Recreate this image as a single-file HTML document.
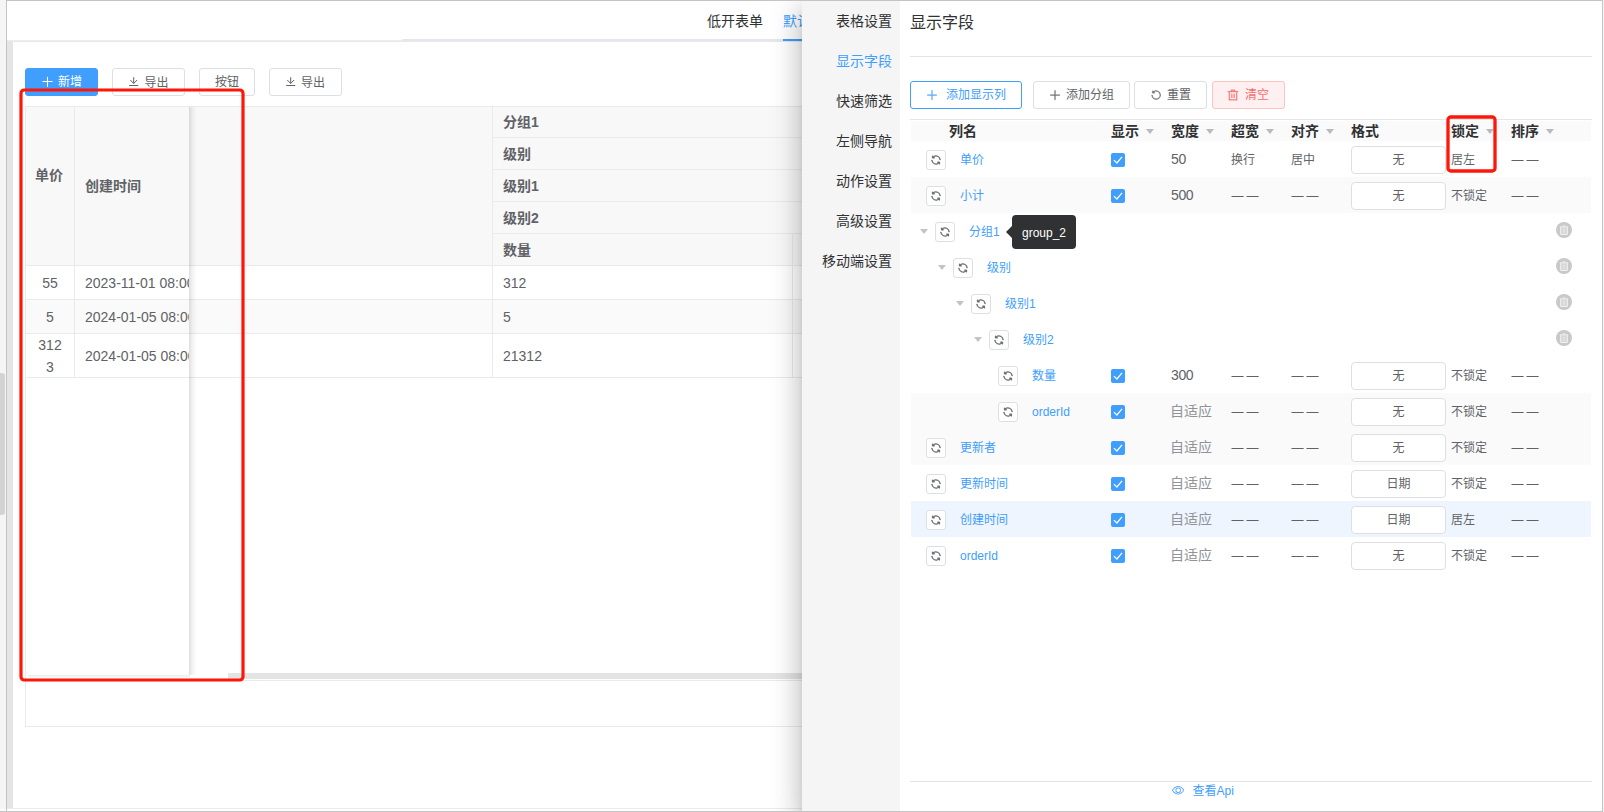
<!DOCTYPE html>
<html lang="zh-CN">
<head>
<meta charset="utf-8">
<title>显示字段</title>
<style>
*{box-sizing:border-box;margin:0;padding:0}
html,body{width:1604px;height:812px;overflow:hidden;background:#f5f5f5}
body{position:relative;font-family:"Liberation Sans","Noto Sans CJK SC",sans-serif;font-size:14px;color:#606266}
.abs{position:absolute}
#frame{position:absolute;left:6px;top:0;width:1597px;height:812px;background:#fff;border:1px solid #c4c4c4;overflow:hidden}
/* everything inside #page is positioned in page coordinates */
#page{position:absolute;left:-7px;top:-1px;width:1604px;height:812px}
.btn{position:absolute;height:28px;border:1px solid #dcdfe6;border-radius:3px;background:#fff;color:#606266;font-size:12px;line-height:26px;white-space:nowrap}
.btn svg{position:absolute}
.btn span{position:absolute;top:0}
</style>
</head>
<body>
<div class="abs" style="left:0;top:811px;width:7px;height:1px;background:#c4c4c4"></div>
<div class="abs" style="left:0;top:809px;width:6px;height:2px;background:#fcfcfc"></div>
<div class="abs" style="left:0;top:373px;width:5px;height:142px;background:#d3d3d3;border-radius:0 3px 3px 0"></div>
<div id="frame"><div id="page">

<!-- ===== left page (behind drawer) ===== -->
<div id="left">
<style>
#left .hl{position:absolute;height:1px;background:#e8eaec}
#left .vl{position:absolute;width:1px;background:#e8eaec}
#left .th{position:absolute;font-weight:bold;font-size:14px;color:#606266;line-height:20px;white-space:nowrap}
#left .td{position:absolute;font-size:14px;color:#606266;line-height:22px;white-space:nowrap}
</style>
<!-- outer scrollbar thumb on the far left -->
<!-- top tab bar -->
<div class="abs" style="left:7px;top:40px;width:395px;height:1px;background:#f3eaea"></div>
<div class="abs" style="left:402px;top:39px;width:400px;height:2px;background:#e4e7ed"></div>
<div class="abs" style="left:7px;top:41px;width:800px;height:1px;background:#e8e8e8"></div>
<div class="abs" style="left:783px;top:39px;width:56px;height:2px;background:#409eff"></div>
<div class="abs" style="left:707px;top:11px;font-size:14px;line-height:20px;color:#303133;white-space:nowrap">低开表单</div>
<div class="abs" style="left:783px;top:11px;font-size:14px;line-height:20px;color:#409eff;white-space:nowrap">默认视图</div>
<!-- grey gutter -->
<div class="abs" style="left:7px;top:42px;width:6px;height:766px;background:#e5e5e5"></div>
<div class="abs" style="left:7px;top:808px;width:1596px;height:1px;background:#ebebeb"></div>

<!-- toolbar buttons -->
<div class="btn" style="left:25px;top:68px;width:73px;background:#409eff;border-color:#409eff;color:#fff">
  <svg style="left:16px;top:7px" width="12" height="12" viewBox="0 0 12 12"><path d="M5.5 0.8v10M0.5 5.5h10" stroke="#fff" stroke-width="1" fill="none"/></svg>
  <span style="left:32px">新增</span>
</div>
<div class="btn" style="left:112px;top:68px;width:73px">
  <svg style="left:16px;top:7px" width="12" height="12" viewBox="0 0 12 12"><path d="M4.7 1.2v6.2M1.3 4l3.4 3.5 3.4-3.5M0.2 9.5h9.1" stroke="#606266" stroke-width="1" fill="none"/></svg>
  <span style="left:31.6px;top:0.5px">导出</span>
</div>
<div class="btn" style="left:199px;top:68px;width:56px"><span style="left:15px">按钮</span></div>
<div class="btn" style="left:269px;top:68px;width:73px">
  <svg style="left:15.6px;top:7px" width="12" height="12" viewBox="0 0 12 12"><path d="M4.7 1.2v6.2M1.3 4l3.4 3.5 3.4-3.5M0.2 9.5h9.1" stroke="#606266" stroke-width="1" fill="none"/></svg>
  <span style="left:31px;top:0.5px">导出</span>
</div>

<!-- vxe table -->
<div class="abs" style="left:25px;top:106px;width:900px;height:575px;border:1px solid #e8eaec;border-right:0;background:#fff"></div>
<div class="abs" style="left:26px;top:107px;width:900px;height:158px;background:#f8f8f9"></div>
<div class="abs" style="left:26px;top:300px;width:900px;height:33px;background:#fafafa"></div>
<!-- header group lines -->
<div class="hl" style="left:492px;top:137px;width:400px"></div>
<div class="hl" style="left:492px;top:169px;width:400px"></div>
<div class="hl" style="left:492px;top:201px;width:400px"></div>
<div class="hl" style="left:492px;top:233px;width:400px"></div>
<div class="hl" style="left:26px;top:265px;width:900px"></div>
<div class="hl" style="left:26px;top:299px;width:900px"></div>
<div class="hl" style="left:26px;top:333px;width:900px"></div>
<div class="hl" style="left:26px;top:377px;width:900px"></div>
<div class="vl" style="left:74px;top:107px;height:271px"></div>
<div class="vl" style="left:492px;top:107px;height:271px"></div>
<div class="vl" style="left:792px;top:234px;height:144px"></div>
<div class="th" style="left:35px;top:165px">单价</div>
<div class="th" style="left:85px;top:176px">创建时间</div>
<div class="th" style="left:503px;top:112px">分组1</div>
<div class="th" style="left:503px;top:144px">级别</div>
<div class="th" style="left:503px;top:176px">级别1</div>
<div class="th" style="left:503px;top:208px">级别2</div>
<div class="th" style="left:503px;top:240px">数量</div>
<div class="td" style="left:26px;width:48px;text-align:center;top:272px">55</div>
<div class="td" style="left:26px;width:48px;text-align:center;top:306px">5</div>
<div class="td" style="left:26px;width:48px;text-align:center;top:334px;white-space:normal">312<br>3</div>
<div class="td" style="left:85px;top:272px;width:104px;overflow:hidden">2023-11-01 08:00:00</div>
<div class="td" style="left:85px;top:306px;width:104px;overflow:hidden">2024-01-05 08:00:00</div>
<div class="td" style="left:85px;top:345px;width:104px;overflow:hidden">2024-01-05 08:00:00</div>
<div class="td" style="left:503px;top:272px">312</div>
<div class="td" style="left:503px;top:306px">5</div>
<div class="td" style="left:503px;top:345px">21312</div>
<!-- fixed-left shadow -->
<div class="abs" style="left:189px;top:107px;width:8px;height:568px;background:linear-gradient(90deg,rgba(0,0,0,.13),rgba(0,0,0,.05) 40%,rgba(0,0,0,0))"></div>
<div class="abs" style="left:28px;top:675px;width:162px;height:3px;background:linear-gradient(180deg,rgba(0,0,0,.08),rgba(0,0,0,0))"></div>
<!-- horizontal scrollbar -->
<div class="abs" style="left:228px;top:673px;width:700px;height:6px;background:#e4e4e4"></div>
<!-- pager box -->
<div class="abs" style="left:25px;top:680px;width:900px;height:47px;border:1px solid #e8eaec;border-right:0"></div>
<!-- red annotation box -->
<svg class="abs" style="left:14px;top:84px" width="240" height="604" viewBox="14 84 240 604"><rect x="21" y="90" width="222" height="590" rx="3.2" fill="none" stroke="#fe1609" stroke-width="3.2"/></svg>
</div>

<!-- ===== drawer ===== -->
<div id="drawer">
<style>
#drawer{position:absolute;left:802px;top:0;width:802px;height:812px;background:#fff;box-shadow:0 8px 10px -5px rgba(0,0,0,.2),0 16px 24px 2px rgba(0,0,0,.14),0 6px 30px 5px rgba(0,0,0,.12)}
#dpage{position:absolute;left:-802px;top:0;width:1604px;height:812px}
.mi{position:absolute;left:802px;width:90px;text-align:right;font-size:14px;line-height:20px;color:#303133;white-space:nowrap}
.mi.on{color:#409eff}
.hd{position:absolute;font-size:14px;font-weight:bold;color:#303133;line-height:20px;white-space:nowrap}
.car{position:absolute;width:0;height:0;border-left:4px solid transparent;border-right:4px solid transparent;border-top:5px solid #c0c4cc}
.car.hc{border-top-color:#b6b9bf}
.ib{position:absolute;width:20px;height:20px;border:1px solid #dcdfe6;border-radius:3px;background:#fff}
.nm{position:absolute;font-size:12px;line-height:18px;color:#409eff;white-space:nowrap}
.cb{position:absolute;width:14px;height:14px;border-radius:2px;background:#409eff}
.t14{position:absolute;font-size:14px;line-height:20px;color:#606266;white-space:nowrap}
.t14.g{color:#909399}
.t12{position:absolute;font-size:12px;line-height:18px;color:#606266;white-space:nowrap}
.ds{position:absolute;font-size:12px;line-height:18px;color:#606266;white-space:nowrap;letter-spacing:3px}
.inp{position:absolute;width:95px;height:28px;border:1px solid #dcdfe6;border-radius:4px;background:#fff;font-size:12px;line-height:26px;text-align:center;color:#606266}
</style>
<div id="dpage">
<div class="abs" style="left:802px;top:0;width:98px;height:812px;background:#f5f5f5"></div>
<div class="mi" style="top:11px">表格设置</div><div class="mi on" style="top:51px">显示字段</div><div class="mi" style="top:91px">快速筛选</div><div class="mi" style="top:131px">左侧导航</div><div class="mi" style="top:171px">动作设置</div><div class="mi" style="top:211px">高级设置</div><div class="mi" style="top:251px">移动端设置</div>
<div class="abs" style="left:910px;top:11px;font-size:16px;line-height:24px;color:#303133;white-space:nowrap">显示字段</div>
<div class="abs" style="left:910px;top:56px;width:682px;height:1px;background:#e0e3ea"></div>
<!-- buttons -->
<div class="btn" style="left:910px;top:81px;width:112px;border-color:#409eff;color:#409eff">
  <svg style="left:15.3px;top:6.6px" width="12" height="12" viewBox="0 0 1024 1024"><path stroke="#409eff" stroke-width="24" fill="#409eff" d="M480 480V128a32 32 0 0 1 64 0v352h352a32 32 0 1 1 0 64H544v352a32 32 0 1 1-64 0V544H128a32 32 0 0 1 0-64h352z"/></svg>
  <span style="left:35px">添加显示列</span>
</div>
<div class="btn" style="left:1033px;top:81px;width:97px">
  <svg style="left:15px;top:6.6px" width="12" height="12" viewBox="0 0 1024 1024"><path stroke="#606266" stroke-width="24" fill="#606266" d="M480 480V128a32 32 0 0 1 64 0v352h352a32 32 0 1 1 0 64H544v352a32 32 0 1 1-64 0V544H128a32 32 0 0 1 0-64h352z"/></svg>
  <span style="left:32px">添加分组</span>
</div>
<div class="btn" style="left:1134px;top:81px;width:73px">
  <svg style="left:15.4px;top:6.5px" width="12" height="12" viewBox="0 0 1024 1024"><path stroke="#606266" stroke-width="24" fill="#606266" d="M289.088 296.704h92.992a32 32 0 0 1 0 64H232.960a32 32 0 0 1-32-32V179.712a32 32 0 0 1 64 0v50.560a384 384 0 0 1 643.840 282.880 384 384 0 0 1-383.936 384 384 384 0 0 1-384-384h64a320 320 0 1 0 640 0 320 320 0 0 0-555.712-216.448z"/></svg>
  <span style="left:32px">重置</span>
</div>
<div class="btn" style="left:1212px;top:81px;width:73px;background:#fef0f0;border-color:#fbc4c4;color:#f56c6c">
  <svg style="left:14.3px;top:6.5px" width="12" height="12" viewBox="0 0 1024 1024"><path stroke="#f56c6c" stroke-width="24" fill="#f56c6c" d="M160 256H96a32 32 0 0 1 0-64h256V95.936a32 32 0 0 1 32-32h256a32 32 0 0 1 32 32V192h256a32 32 0 1 1 0 64h-64v672a32 32 0 0 1-32 32H192a32 32 0 0 1-32-32V256zm448-64v-64H416v64h192zM224 896h576V256H224v640zm192-128a32 32 0 0 1-32-32V416a32 32 0 0 1 64 0v320a32 32 0 0 1-32 32zm192 0a32 32 0 0 1-32-32V416a32 32 0 0 1 64 0v320a32 32 0 0 1-32 32z"/></svg>
  <span style="left:32px">清空</span>
</div>
<!-- table header -->
<div class="abs" style="left:910px;top:119px;width:682px;height:1px;background:#e6e6e6"></div>
<div class="abs" style="left:911px;top:121px;width:680px;height:20px;background:#fafafa"></div>
<div class="hd" style="left:949px;top:121px">列名</div><div class="hd" style="left:1111px;top:121px">显示</div><div class="car hc" style="left:1145.5px;top:129px"></div><div class="hd" style="left:1171px;top:121px">宽度</div><div class="car hc" style="left:1205.5px;top:129px"></div><div class="hd" style="left:1231px;top:121px">超宽</div><div class="car hc" style="left:1265.5px;top:129px"></div><div class="hd" style="left:1291px;top:121px">对齐</div><div class="car hc" style="left:1325.5px;top:129px"></div><div class="hd" style="left:1351px;top:121px">格式</div><div class="hd" style="left:1451px;top:121px">锁定</div><div class="car hc" style="left:1485.5px;top:129px"></div><div class="hd" style="left:1511px;top:121px">排序</div><div class="car hc" style="left:1545.5px;top:129px"></div>
<div class="ib" style="left:926px;top:150px"><svg width="12" height="12" viewBox="0 0 1024 1024" style="position:absolute;left:3.35px;top:2.5px"><path fill="#55585e" stroke="#55585e" stroke-width="30" d="M771.776 794.88A384 384 0 0 1 128 512h64a320 320 0 0 0 555.712 216.448H654.720a32 32 0 1 1 0-64h149.056a32 32 0 0 1 32 32v148.928a32 32 0 1 1-64 0v-50.560zM276.288 295.616h92.992a32 32 0 0 1 0 64H220.160a32 32 0 0 1-32-32V178.560a32 32 0 0 1 64 0v50.560A384 384 0 0 1 896.128 512h-64a320 320 0 0 0-555.776-216.384z"/></svg></div>
<div class="nm" style="left:960px;top:151px">单价</div>
<div class="cb" style="left:1111px;top:153px"><svg width="14" height="14" viewBox="0 0 14 14" style="position:absolute;left:0;top:0"><path d="M2.9 7.1L5.9 10 11 3.9" fill="none" stroke="#fff" stroke-width="1.2"/></svg></div>
<div class="t14" style="left:1171px;top:149px;letter-spacing:-0.4px">50</div>
<div class="t12" style="left:1231px;top:151px">换行</div>
<div class="t12" style="left:1291px;top:151px">居中</div>
<div class="inp" style="left:1351px;top:146px">无</div>
<div class="t12" style="left:1451px;top:151px">居左</div>
<div class="ds" style="left:1511.5px;top:151px">——</div>
<div class="abs" style="left:911px;top:177px;width:680px;height:36px;background:#fafafa"></div>
<div class="ib" style="left:926px;top:186px"><svg width="12" height="12" viewBox="0 0 1024 1024" style="position:absolute;left:3.35px;top:2.5px"><path fill="#55585e" stroke="#55585e" stroke-width="30" d="M771.776 794.88A384 384 0 0 1 128 512h64a320 320 0 0 0 555.712 216.448H654.720a32 32 0 1 1 0-64h149.056a32 32 0 0 1 32 32v148.928a32 32 0 1 1-64 0v-50.560zM276.288 295.616h92.992a32 32 0 0 1 0 64H220.160a32 32 0 0 1-32-32V178.560a32 32 0 0 1 64 0v50.560A384 384 0 0 1 896.128 512h-64a320 320 0 0 0-555.776-216.384z"/></svg></div>
<div class="nm" style="left:960px;top:187px">小计</div>
<div class="cb" style="left:1111px;top:189px"><svg width="14" height="14" viewBox="0 0 14 14" style="position:absolute;left:0;top:0"><path d="M2.9 7.1L5.9 10 11 3.9" fill="none" stroke="#fff" stroke-width="1.2"/></svg></div>
<div class="t14" style="left:1171px;top:185px;letter-spacing:-0.4px">500</div>
<div class="ds" style="left:1231.5px;top:187px">——</div>
<div class="ds" style="left:1291.5px;top:187px">——</div>
<div class="inp" style="left:1351px;top:182px">无</div>
<div class="t12" style="left:1451px;top:187px">不锁定</div>
<div class="ds" style="left:1511.5px;top:187px">——</div>
<div class="car" style="left:919.5px;top:229px"></div>
<div class="ib" style="left:935px;top:222px"><svg width="12" height="12" viewBox="0 0 1024 1024" style="position:absolute;left:3.35px;top:2.5px"><path fill="#55585e" stroke="#55585e" stroke-width="30" d="M771.776 794.88A384 384 0 0 1 128 512h64a320 320 0 0 0 555.712 216.448H654.720a32 32 0 1 1 0-64h149.056a32 32 0 0 1 32 32v148.928a32 32 0 1 1-64 0v-50.560zM276.288 295.616h92.992a32 32 0 0 1 0 64H220.160a32 32 0 0 1-32-32V178.560a32 32 0 0 1 64 0v50.560A384 384 0 0 1 896.128 512h-64a320 320 0 0 0-555.776-216.384z"/></svg></div>
<div class="nm" style="left:969px;top:223px">分组1</div>
<div class="abs" style="left:1556px;top:222px;width:16px;height:16px"><svg width="16" height="16" viewBox="0 0 16 16" style="position:absolute;left:0;top:0"><circle cx="8" cy="8" r="8" fill="#c9c9c9"/><path d="M4.7 5.2v7.2h6.6V5.2" fill="#d6d6d6" stroke="#f2f2f2" stroke-width="1"/><path d="M3.9 4.9h8.2M6.9 3.9h2.2" stroke="#f2f2f2" stroke-width="1" fill="none"/><path d="M8 6.8v4" stroke="#e6e6e6" stroke-width="1.4"/></svg></div>
<div class="car" style="left:937.5px;top:265px"></div>
<div class="ib" style="left:953px;top:258px"><svg width="12" height="12" viewBox="0 0 1024 1024" style="position:absolute;left:3.35px;top:2.5px"><path fill="#55585e" stroke="#55585e" stroke-width="30" d="M771.776 794.88A384 384 0 0 1 128 512h64a320 320 0 0 0 555.712 216.448H654.720a32 32 0 1 1 0-64h149.056a32 32 0 0 1 32 32v148.928a32 32 0 1 1-64 0v-50.560zM276.288 295.616h92.992a32 32 0 0 1 0 64H220.160a32 32 0 0 1-32-32V178.560a32 32 0 0 1 64 0v50.560A384 384 0 0 1 896.128 512h-64a320 320 0 0 0-555.776-216.384z"/></svg></div>
<div class="nm" style="left:987px;top:259px">级别</div>
<div class="abs" style="left:1556px;top:258px;width:16px;height:16px"><svg width="16" height="16" viewBox="0 0 16 16" style="position:absolute;left:0;top:0"><circle cx="8" cy="8" r="8" fill="#c9c9c9"/><path d="M4.7 5.2v7.2h6.6V5.2" fill="#d6d6d6" stroke="#f2f2f2" stroke-width="1"/><path d="M3.9 4.9h8.2M6.9 3.9h2.2" stroke="#f2f2f2" stroke-width="1" fill="none"/><path d="M8 6.8v4" stroke="#e6e6e6" stroke-width="1.4"/></svg></div>
<div class="car" style="left:955.5px;top:301px"></div>
<div class="ib" style="left:971px;top:294px"><svg width="12" height="12" viewBox="0 0 1024 1024" style="position:absolute;left:3.35px;top:2.5px"><path fill="#55585e" stroke="#55585e" stroke-width="30" d="M771.776 794.88A384 384 0 0 1 128 512h64a320 320 0 0 0 555.712 216.448H654.720a32 32 0 1 1 0-64h149.056a32 32 0 0 1 32 32v148.928a32 32 0 1 1-64 0v-50.560zM276.288 295.616h92.992a32 32 0 0 1 0 64H220.160a32 32 0 0 1-32-32V178.560a32 32 0 0 1 64 0v50.560A384 384 0 0 1 896.128 512h-64a320 320 0 0 0-555.776-216.384z"/></svg></div>
<div class="nm" style="left:1005px;top:295px">级别1</div>
<div class="abs" style="left:1556px;top:294px;width:16px;height:16px"><svg width="16" height="16" viewBox="0 0 16 16" style="position:absolute;left:0;top:0"><circle cx="8" cy="8" r="8" fill="#c9c9c9"/><path d="M4.7 5.2v7.2h6.6V5.2" fill="#d6d6d6" stroke="#f2f2f2" stroke-width="1"/><path d="M3.9 4.9h8.2M6.9 3.9h2.2" stroke="#f2f2f2" stroke-width="1" fill="none"/><path d="M8 6.8v4" stroke="#e6e6e6" stroke-width="1.4"/></svg></div>
<div class="car" style="left:973.5px;top:337px"></div>
<div class="ib" style="left:989px;top:330px"><svg width="12" height="12" viewBox="0 0 1024 1024" style="position:absolute;left:3.35px;top:2.5px"><path fill="#55585e" stroke="#55585e" stroke-width="30" d="M771.776 794.88A384 384 0 0 1 128 512h64a320 320 0 0 0 555.712 216.448H654.720a32 32 0 1 1 0-64h149.056a32 32 0 0 1 32 32v148.928a32 32 0 1 1-64 0v-50.560zM276.288 295.616h92.992a32 32 0 0 1 0 64H220.160a32 32 0 0 1-32-32V178.560a32 32 0 0 1 64 0v50.560A384 384 0 0 1 896.128 512h-64a320 320 0 0 0-555.776-216.384z"/></svg></div>
<div class="nm" style="left:1023px;top:331px">级别2</div>
<div class="abs" style="left:1556px;top:330px;width:16px;height:16px"><svg width="16" height="16" viewBox="0 0 16 16" style="position:absolute;left:0;top:0"><circle cx="8" cy="8" r="8" fill="#c9c9c9"/><path d="M4.7 5.2v7.2h6.6V5.2" fill="#d6d6d6" stroke="#f2f2f2" stroke-width="1"/><path d="M3.9 4.9h8.2M6.9 3.9h2.2" stroke="#f2f2f2" stroke-width="1" fill="none"/><path d="M8 6.8v4" stroke="#e6e6e6" stroke-width="1.4"/></svg></div>
<div class="ib" style="left:998px;top:366px"><svg width="12" height="12" viewBox="0 0 1024 1024" style="position:absolute;left:3.35px;top:2.5px"><path fill="#55585e" stroke="#55585e" stroke-width="30" d="M771.776 794.88A384 384 0 0 1 128 512h64a320 320 0 0 0 555.712 216.448H654.720a32 32 0 1 1 0-64h149.056a32 32 0 0 1 32 32v148.928a32 32 0 1 1-64 0v-50.560zM276.288 295.616h92.992a32 32 0 0 1 0 64H220.160a32 32 0 0 1-32-32V178.560a32 32 0 0 1 64 0v50.560A384 384 0 0 1 896.128 512h-64a320 320 0 0 0-555.776-216.384z"/></svg></div>
<div class="nm" style="left:1032px;top:367px">数量</div>
<div class="cb" style="left:1111px;top:369px"><svg width="14" height="14" viewBox="0 0 14 14" style="position:absolute;left:0;top:0"><path d="M2.9 7.1L5.9 10 11 3.9" fill="none" stroke="#fff" stroke-width="1.2"/></svg></div>
<div class="t14" style="left:1171px;top:365px;letter-spacing:-0.4px">300</div>
<div class="ds" style="left:1231.5px;top:367px">——</div>
<div class="ds" style="left:1291.5px;top:367px">——</div>
<div class="inp" style="left:1351px;top:362px">无</div>
<div class="t12" style="left:1451px;top:367px">不锁定</div>
<div class="ds" style="left:1511.5px;top:367px">——</div>
<div class="abs" style="left:911px;top:393px;width:680px;height:36px;background:#fafafa"></div>
<div class="ib" style="left:998px;top:402px"><svg width="12" height="12" viewBox="0 0 1024 1024" style="position:absolute;left:3.35px;top:2.5px"><path fill="#55585e" stroke="#55585e" stroke-width="30" d="M771.776 794.88A384 384 0 0 1 128 512h64a320 320 0 0 0 555.712 216.448H654.720a32 32 0 1 1 0-64h149.056a32 32 0 0 1 32 32v148.928a32 32 0 1 1-64 0v-50.560zM276.288 295.616h92.992a32 32 0 0 1 0 64H220.160a32 32 0 0 1-32-32V178.560a32 32 0 0 1 64 0v50.560A384 384 0 0 1 896.128 512h-64a320 320 0 0 0-555.776-216.384z"/></svg></div>
<div class="nm" style="left:1032px;top:403px">orderId</div>
<div class="cb" style="left:1111px;top:405px"><svg width="14" height="14" viewBox="0 0 14 14" style="position:absolute;left:0;top:0"><path d="M2.9 7.1L5.9 10 11 3.9" fill="none" stroke="#fff" stroke-width="1.2"/></svg></div>
<div class="t14 g" style="left:1170px;top:401px">自适应</div>
<div class="ds" style="left:1231.5px;top:403px">——</div>
<div class="ds" style="left:1291.5px;top:403px">——</div>
<div class="inp" style="left:1351px;top:398px">无</div>
<div class="t12" style="left:1451px;top:403px">不锁定</div>
<div class="ds" style="left:1511.5px;top:403px">——</div>
<div class="abs" style="left:911px;top:429px;width:680px;height:36px;background:#fafafa"></div>
<div class="ib" style="left:926px;top:438px"><svg width="12" height="12" viewBox="0 0 1024 1024" style="position:absolute;left:3.35px;top:2.5px"><path fill="#55585e" stroke="#55585e" stroke-width="30" d="M771.776 794.88A384 384 0 0 1 128 512h64a320 320 0 0 0 555.712 216.448H654.720a32 32 0 1 1 0-64h149.056a32 32 0 0 1 32 32v148.928a32 32 0 1 1-64 0v-50.560zM276.288 295.616h92.992a32 32 0 0 1 0 64H220.160a32 32 0 0 1-32-32V178.560a32 32 0 0 1 64 0v50.560A384 384 0 0 1 896.128 512h-64a320 320 0 0 0-555.776-216.384z"/></svg></div>
<div class="nm" style="left:960px;top:439px">更新者</div>
<div class="cb" style="left:1111px;top:441px"><svg width="14" height="14" viewBox="0 0 14 14" style="position:absolute;left:0;top:0"><path d="M2.9 7.1L5.9 10 11 3.9" fill="none" stroke="#fff" stroke-width="1.2"/></svg></div>
<div class="t14 g" style="left:1170px;top:437px">自适应</div>
<div class="ds" style="left:1231.5px;top:439px">——</div>
<div class="ds" style="left:1291.5px;top:439px">——</div>
<div class="inp" style="left:1351px;top:434px">无</div>
<div class="t12" style="left:1451px;top:439px">不锁定</div>
<div class="ds" style="left:1511.5px;top:439px">——</div>
<div class="ib" style="left:926px;top:474px"><svg width="12" height="12" viewBox="0 0 1024 1024" style="position:absolute;left:3.35px;top:2.5px"><path fill="#55585e" stroke="#55585e" stroke-width="30" d="M771.776 794.88A384 384 0 0 1 128 512h64a320 320 0 0 0 555.712 216.448H654.720a32 32 0 1 1 0-64h149.056a32 32 0 0 1 32 32v148.928a32 32 0 1 1-64 0v-50.560zM276.288 295.616h92.992a32 32 0 0 1 0 64H220.160a32 32 0 0 1-32-32V178.560a32 32 0 0 1 64 0v50.560A384 384 0 0 1 896.128 512h-64a320 320 0 0 0-555.776-216.384z"/></svg></div>
<div class="nm" style="left:960px;top:475px">更新时间</div>
<div class="cb" style="left:1111px;top:477px"><svg width="14" height="14" viewBox="0 0 14 14" style="position:absolute;left:0;top:0"><path d="M2.9 7.1L5.9 10 11 3.9" fill="none" stroke="#fff" stroke-width="1.2"/></svg></div>
<div class="t14 g" style="left:1170px;top:473px">自适应</div>
<div class="ds" style="left:1231.5px;top:475px">——</div>
<div class="ds" style="left:1291.5px;top:475px">——</div>
<div class="inp" style="left:1351px;top:470px">日期</div>
<div class="t12" style="left:1451px;top:475px">不锁定</div>
<div class="ds" style="left:1511.5px;top:475px">——</div>
<div class="abs" style="left:911px;top:501px;width:680px;height:36px;background:#eef5fe"></div>
<div class="ib" style="left:926px;top:510px"><svg width="12" height="12" viewBox="0 0 1024 1024" style="position:absolute;left:3.35px;top:2.5px"><path fill="#55585e" stroke="#55585e" stroke-width="30" d="M771.776 794.88A384 384 0 0 1 128 512h64a320 320 0 0 0 555.712 216.448H654.720a32 32 0 1 1 0-64h149.056a32 32 0 0 1 32 32v148.928a32 32 0 1 1-64 0v-50.560zM276.288 295.616h92.992a32 32 0 0 1 0 64H220.160a32 32 0 0 1-32-32V178.560a32 32 0 0 1 64 0v50.560A384 384 0 0 1 896.128 512h-64a320 320 0 0 0-555.776-216.384z"/></svg></div>
<div class="nm" style="left:960px;top:511px">创建时间</div>
<div class="cb" style="left:1111px;top:513px"><svg width="14" height="14" viewBox="0 0 14 14" style="position:absolute;left:0;top:0"><path d="M2.9 7.1L5.9 10 11 3.9" fill="none" stroke="#fff" stroke-width="1.2"/></svg></div>
<div class="t14 g" style="left:1170px;top:509px">自适应</div>
<div class="ds" style="left:1231.5px;top:511px">——</div>
<div class="ds" style="left:1291.5px;top:511px">——</div>
<div class="inp" style="left:1351px;top:506px">日期</div>
<div class="t12" style="left:1451px;top:511px">居左</div>
<div class="ds" style="left:1511.5px;top:511px">——</div>
<div class="ib" style="left:926px;top:546px"><svg width="12" height="12" viewBox="0 0 1024 1024" style="position:absolute;left:3.35px;top:2.5px"><path fill="#55585e" stroke="#55585e" stroke-width="30" d="M771.776 794.88A384 384 0 0 1 128 512h64a320 320 0 0 0 555.712 216.448H654.720a32 32 0 1 1 0-64h149.056a32 32 0 0 1 32 32v148.928a32 32 0 1 1-64 0v-50.560zM276.288 295.616h92.992a32 32 0 0 1 0 64H220.160a32 32 0 0 1-32-32V178.560a32 32 0 0 1 64 0v50.560A384 384 0 0 1 896.128 512h-64a320 320 0 0 0-555.776-216.384z"/></svg></div>
<div class="nm" style="left:960px;top:547px">orderId</div>
<div class="cb" style="left:1111px;top:549px"><svg width="14" height="14" viewBox="0 0 14 14" style="position:absolute;left:0;top:0"><path d="M2.9 7.1L5.9 10 11 3.9" fill="none" stroke="#fff" stroke-width="1.2"/></svg></div>
<div class="t14 g" style="left:1170px;top:545px">自适应</div>
<div class="ds" style="left:1231.5px;top:547px">——</div>
<div class="ds" style="left:1291.5px;top:547px">——</div>
<div class="inp" style="left:1351px;top:542px">无</div>
<div class="t12" style="left:1451px;top:547px">不锁定</div>
<div class="ds" style="left:1511.5px;top:547px">——</div>
<!-- tooltip -->
<div class="abs" style="left:1012px;top:215px;width:64px;height:34px;background:#303133;border-radius:4px;color:#fff;font-size:12px;line-height:36px;text-align:center">group_2</div>
<div class="abs" style="left:1006px;top:226px;width:0;height:0;border-top:6px solid transparent;border-bottom:6px solid transparent;border-right:6px solid #303133"></div>
<!-- small red annotation -->
<svg class="abs" style="left:1440px;top:110px" width="64" height="70" viewBox="1440 110 64 70"><rect x="1448" y="117" width="47" height="54" rx="2.8" fill="none" stroke="#fe1609" stroke-width="3.3"/></svg>
<!-- footer -->
<div class="abs" style="left:910px;top:781px;width:682px;height:1px;background:#e3e3e3"></div>
<svg class="abs" style="left:1172px;top:784.4px" width="12.4" height="12.4" viewBox="0 0 1024 1024"><path fill="#409eff" d="M512 160c320 0 512 352 512 352S832 864 512 864 0 512 0 512s192-352 512-352zm0 64c-225.280 0-384.128 208.064-436.800 288 52.608 79.872 211.456 288 436.800 288 225.280 0 384.128-208.064 436.800-288-52.608-79.872-211.456-288-436.800-288zm0 64a224 224 0 1 1 0 448 224 224 0 0 1 0-448zm0 64a160.192 160.192 0 0 0-160 160c0 88.192 71.744 160 160 160s160-71.808 160-160-71.744-160-160-160z"/></svg>
<div class="abs" style="left:1192.6px;top:782px;font-size:12px;line-height:18px;color:#409eff;white-space:nowrap">查看Api</div>
</div>
</div>

</div></div>
</body>
</html>
